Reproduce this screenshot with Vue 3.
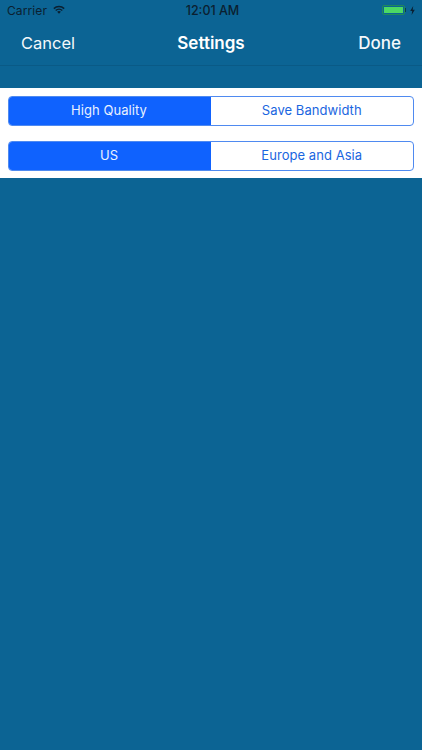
<script setup>
const groups = [
  ['High Quality', 'Save Bandwidth'],
  ['US', 'Europe and Asia'],
]
</script>

<template>
  <div class="screen">
    <header class="top">
      <div class="status">
        <div class="status-left">
          <span class="carrier">Carrier</span>
          <svg class="wifi" width="12" height="9" viewBox="0 0 13 10">
            <path d="M0.2 3.4A9 9 0 0 1 12.8 3.4L11.7 4.6A7.4 7.4 0 0 0 1.3 4.6Z" fill="#0b1f30" />
            <path d="M2.3 5.5A6 6 0 0 1 10.7 5.5L9.6 6.7A4.4 4.4 0 0 0 3.4 6.7Z" fill="#0b1f30" />
            <path d="M4.4 7.6A3 3 0 0 1 8.6 7.6L6.5 9.8Z" fill="#0b1f30" />
          </svg>
        </div>
        <span class="time">12:01 AM</span>
        <div class="status-right">
          <span class="battery"><span class="level"></span></span>
          <span class="nub"></span>
          <svg class="bolt" width="5" height="9" viewBox="0 0 5 9">
            <path d="M3.2 0L0.2 5H2.2L1.6 9L4.8 3.7H2.7Z" fill="#0b1f30" />
          </svg>
        </div>
      </div>
      <nav class="nav">
        <span class="nav-btn cancel">Cancel</span>
        <span class="title">Settings</span>
        <span class="nav-btn done">Done</span>
      </nav>
    </header>
    <section class="panel">
      <div v-for="g in groups" :key="g[0]" class="segment">
        <div class="seg on"><span class="label">{{ g[0] }}</span></div>
        <div class="seg"><span class="label">{{ g[1] }}</span></div>
      </div>
    </section>
  </div>
</template>

<style>
html, body { margin: 0; background: #0c6494; }
</style>

<style scoped>
.screen {
  width: 422px;
  height: 750px;
  overflow: hidden;
  background: #0c6494;
  font-family: Inter, "Liberation Sans", sans-serif;
}
.top {
  height: 65px;
  border-bottom: 1px solid #0a5a86;
}
.status {
  height: 20px;
  display: grid;
  grid-template-columns: 1fr auto 1fr;
  align-items: center;
  padding: 0 7px;
  color: #0b1f30;
  font-size: 12px;
}
.status-left { display: flex; align-items: center; gap: 6px; }
.carrier { letter-spacing: 0.1px; }
.wifi { margin-top: -1px; }
.time { font-weight: 500; font-size: 12.5px; margin-left: 3px; }
.status-right { display: flex; align-items: center; justify-content: flex-end; }
.battery {
  width: 23px;
  height: 10px;
  box-sizing: border-box;
  border: 1px solid #1f8a5a;
  border-radius: 2px;
  padding: 1px;
  display: flex;
}
.level { flex: 1; background: #4cd964; }
.nub { width: 1.5px; height: 4px; background: #0b3a50; margin-right: 4px; }
.nav {
  height: 45px;
  display: flex;
  align-items: center;
  justify-content: space-between;
  padding: 0 21px;
  color: #fff;
  font-size: 17px;
  position: relative;
}
.nav-btn { color: #f4f8fb; }
.cancel { font-size: 16.5px; }
.done { font-weight: 500; }
.title {
  position: absolute;
  left: 0;
  right: 0;
  text-align: center;
  font-weight: 600;
  pointer-events: none;
}
.panel {
  margin-top: 22px;
  background: #fff;
  height: 90px;
  box-sizing: border-box;
  padding: 8px 8px 0 8px;
  display: flex;
  flex-direction: column;
  gap: 15px;
}
.segment {
  height: 30px;
  display: flex;
  box-sizing: border-box;
  border: 1.5px solid #4f8af0;
  border-radius: 4px;
  overflow: hidden;
  font-size: 13px;
  width: 406px;
}
.seg {
  flex: 1;
  display: flex;
  align-items: center;
  justify-content: center;
  color: #1a66e0;
  letter-spacing: 0.05px;
}
.label { margin-top: -2px; }
.seg.on {
  flex: 0 0 203px;
  background: #0f62fe;
  color: #e9f1ff;
  margin: -1.5px 0 -1.5px -1.5px;
}
</style>
